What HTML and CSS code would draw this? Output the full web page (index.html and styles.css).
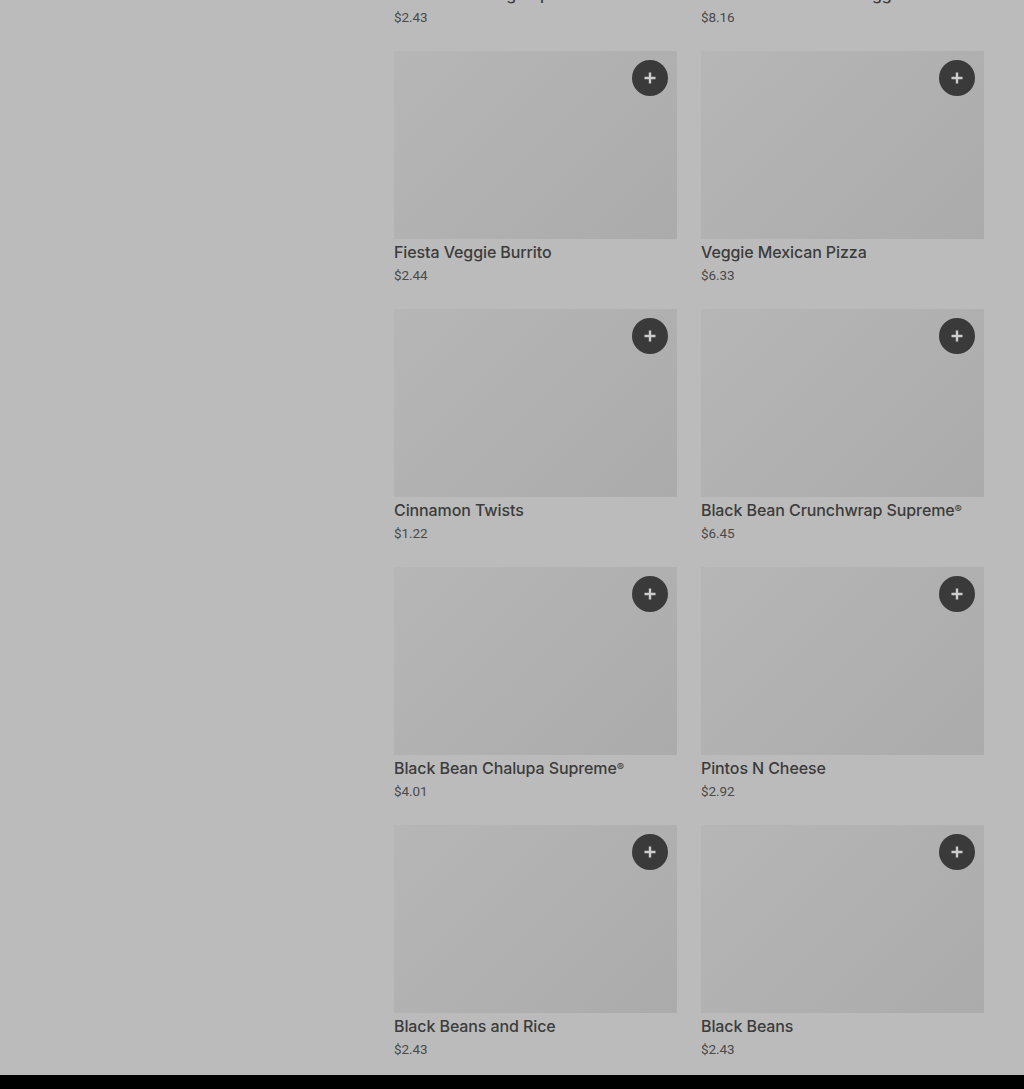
FILE: index.html
```html
<!DOCTYPE html>
<html lang="en">
<head>
<meta charset="utf-8">
<title>Vegetarian Menu</title>
<link rel="stylesheet" href="styles.css">
</head>
<body>
<div class="page">
  <main class="layout">
    <aside class="side"></aside>
    <section class="grid">
      <article class="card"><div class="thumb"><button class="add"><svg viewBox="0 0 12 12"><path d="M6 .5v11M.5 6h11"/></svg></button></div><h3 class="name">Bean Burrito Big Supreme</h3><p class="price">$2.43</p></article>
      <article class="card"><div class="thumb"><button class="add"><svg viewBox="0 0 12 12"><path d="M6 .5v11M.5 6h11"/></svg></button></div><h3 class="name">Power Menu Bowl - Veggie</h3><p class="price">$8.16</p></article>
      <article class="card"><div class="thumb"><button class="add"><svg viewBox="0 0 12 12"><path d="M6 .5v11M.5 6h11"/></svg></button></div><h3 class="name">Fiesta Veggie Burrito</h3><p class="price">$2.44</p></article>
      <article class="card"><div class="thumb"><button class="add"><svg viewBox="0 0 12 12"><path d="M6 .5v11M.5 6h11"/></svg></button></div><h3 class="name">Veggie Mexican Pizza</h3><p class="price">$6.33</p></article>
      <article class="card"><div class="thumb"><button class="add"><svg viewBox="0 0 12 12"><path d="M6 .5v11M.5 6h11"/></svg></button></div><h3 class="name">Cinnamon Twists</h3><p class="price">$1.22</p></article>
      <article class="card"><div class="thumb"><button class="add"><svg viewBox="0 0 12 12"><path d="M6 .5v11M.5 6h11"/></svg></button></div><h3 class="name">Black Bean Crunchwrap Supreme<span class="reg">®</span></h3><p class="price">$6.45</p></article>
      <article class="card"><div class="thumb"><button class="add"><svg viewBox="0 0 12 12"><path d="M6 .5v11M.5 6h11"/></svg></button></div><h3 class="name">Black Bean Chalupa Supreme<span class="reg">®</span></h3><p class="price">$4.01</p></article>
      <article class="card"><div class="thumb"><button class="add"><svg viewBox="0 0 12 12"><path d="M6 .5v11M.5 6h11"/></svg></button></div><h3 class="name">Pintos N Cheese</h3><p class="price">$2.92</p></article>
      <article class="card"><div class="thumb"><button class="add"><svg viewBox="0 0 12 12"><path d="M6 .5v11M.5 6h11"/></svg></button></div><h3 class="name">Black Beans and Rice</h3><p class="price">$2.43</p></article>
      <article class="card"><div class="thumb"><button class="add"><svg viewBox="0 0 12 12"><path d="M6 .5v11M.5 6h11"/></svg></button></div><h3 class="name">Black Beans</h3><p class="price">$2.43</p></article>
    </section>
  </main>
  <footer class="foot"></footer>
</div>
</body>
</html>
```
FILE: styles.css
```css
* { box-sizing: border-box; }
html, body { margin: 0; padding: 0; background: #bbbbbb; }
body { height: 1089px; overflow: hidden; font-family: Inter, Roboto, "Liberation Sans", sans-serif; color: #3c3c3c; }
.page { display: flex; flex-direction: column; height: 1089px; }
.layout { display: flex; margin-top: -207px; padding-right: 40px; }
.side { width: 394px; flex: none; }
.grid { flex: 1; display: grid; grid-template-columns: 283px 283px; column-gap: 24px; row-gap: 23px; }
.thumb { height: 188px; background: linear-gradient(135deg, #b6b6b6 0%, #ababab 100%); display: flex; justify-content: flex-end; padding: 9px 9px 0 0; }
.add { width: 36px; height: 36px; border-radius: 50%; border: 0; padding: 0; background: #3a3a3a; display: flex; align-items: center; justify-content: center; }
.add svg { width: 12px; height: 12px; }
.add path { stroke: #cccccc; stroke-width: 2.4; fill: none; }
.name { margin: 1px 0 0; font-size: 16px; line-height: 24px; font-weight: 500; color: #3c3c3c; letter-spacing: -0.1px; }
.reg { font-size: 11px; vertical-align: 3px; line-height: 0; }
.price { margin: 0; font-family: Roboto, "Liberation Sans", sans-serif; font-size: 13.5px; line-height: 22px; font-weight: 400; color: #4a4a4a; letter-spacing: -0.1px; }
.foot { flex: none; height: 14px; margin-top: 15px; background: #000; }
```
